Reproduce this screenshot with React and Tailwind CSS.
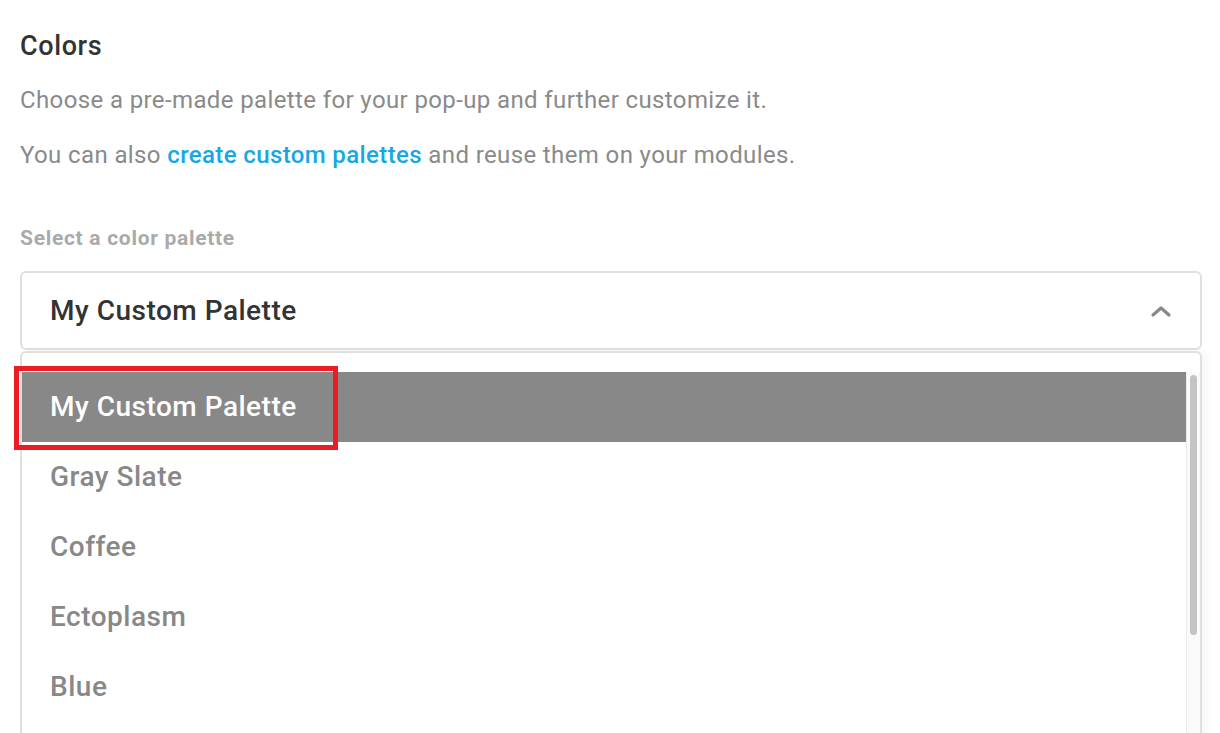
const palettes = ['My Custom Palette', 'Gray Slate', 'Coffee', 'Ectoplasm', 'Blue', 'Green'];

function ChevronUp() {
  return (
    <svg width="22" height="14" viewBox="0 0 22 14" fill="none">
      <path d="M3 11 L11 4 L19 11" stroke="#888" strokeWidth="3.2" strokeLinecap="round" strokeLinejoin="round" />
    </svg>
  );
}

export default function App() {
  return (
    <div
      className="h-[733px] w-[1220px] overflow-hidden bg-white pl-5 pr-[18px] pt-[28px]"
      style={{ fontFamily: 'Roboto, "Open Sans", sans-serif' }}
    >
      <h2 className="text-[27px] leading-[36px] font-medium tracking-[0.6px] text-[#333]">Colors</h2>
      <p className="mt-[20px] text-[24px] leading-[32px] tracking-[0.38px] text-[#8a8a8a]">
        Choose a pre-made palette for your pop-up and further customize it.
      </p>
      <p className="mt-[23px] text-[24px] leading-[32px] tracking-[0.38px] text-[#8a8a8a]">
        You can also <a className="font-medium text-[#17a8e3]">create custom palettes</a> and reuse them on your modules.
      </p>

      <label className="mt-[53px] block text-[21px] leading-[28px] font-bold tracking-[0.7px] text-[#aaa]">Select a color palette</label>

      <div className="mt-[19px] flex h-[79px] items-center justify-between rounded-md border-2 border-[#e0e0e0] pl-[28px] pr-[28px]">
        <span className="text-[28px] font-medium tracking-[0.5px] text-[#333]">My Custom Palette</span>
        <ChevronUp />
      </div>

      <div className="relative mt-[1px] flex h-[400px] rounded-t-md border-2 border-b-0 border-[#e0e0e0] shadow-[4px_0_8px_rgba(0,0,0,0.04)]">
        <ul className="flex-1 pt-[19px]">
          {palettes.map((name, i) => (
            <li
              key={name}
              className={
                i === 0
                  ? 'flex h-[70px] items-center bg-[#888] pl-[28px] text-[28px] font-medium tracking-[0.5px] text-white'
                  : 'flex h-[70px] items-center pl-[28px] text-[28px] font-medium tracking-[0.5px] text-[#888]'
              }
            >
              {name}
            </li>
          ))}
        </ul>
        <div className="mt-[19px] w-[14px] border-l border-[#ececec] bg-[#fafafa] px-[3px] pt-[3px]">
          <div className="h-[260px] rounded-full bg-[#c4c4c4]" />
        </div>
        <div className="pointer-events-none absolute left-[-8px] top-[13px] h-[84px] w-[324px] border-[5px] border-[#ed1c24]" />
      </div>
    </div>
  );
}
